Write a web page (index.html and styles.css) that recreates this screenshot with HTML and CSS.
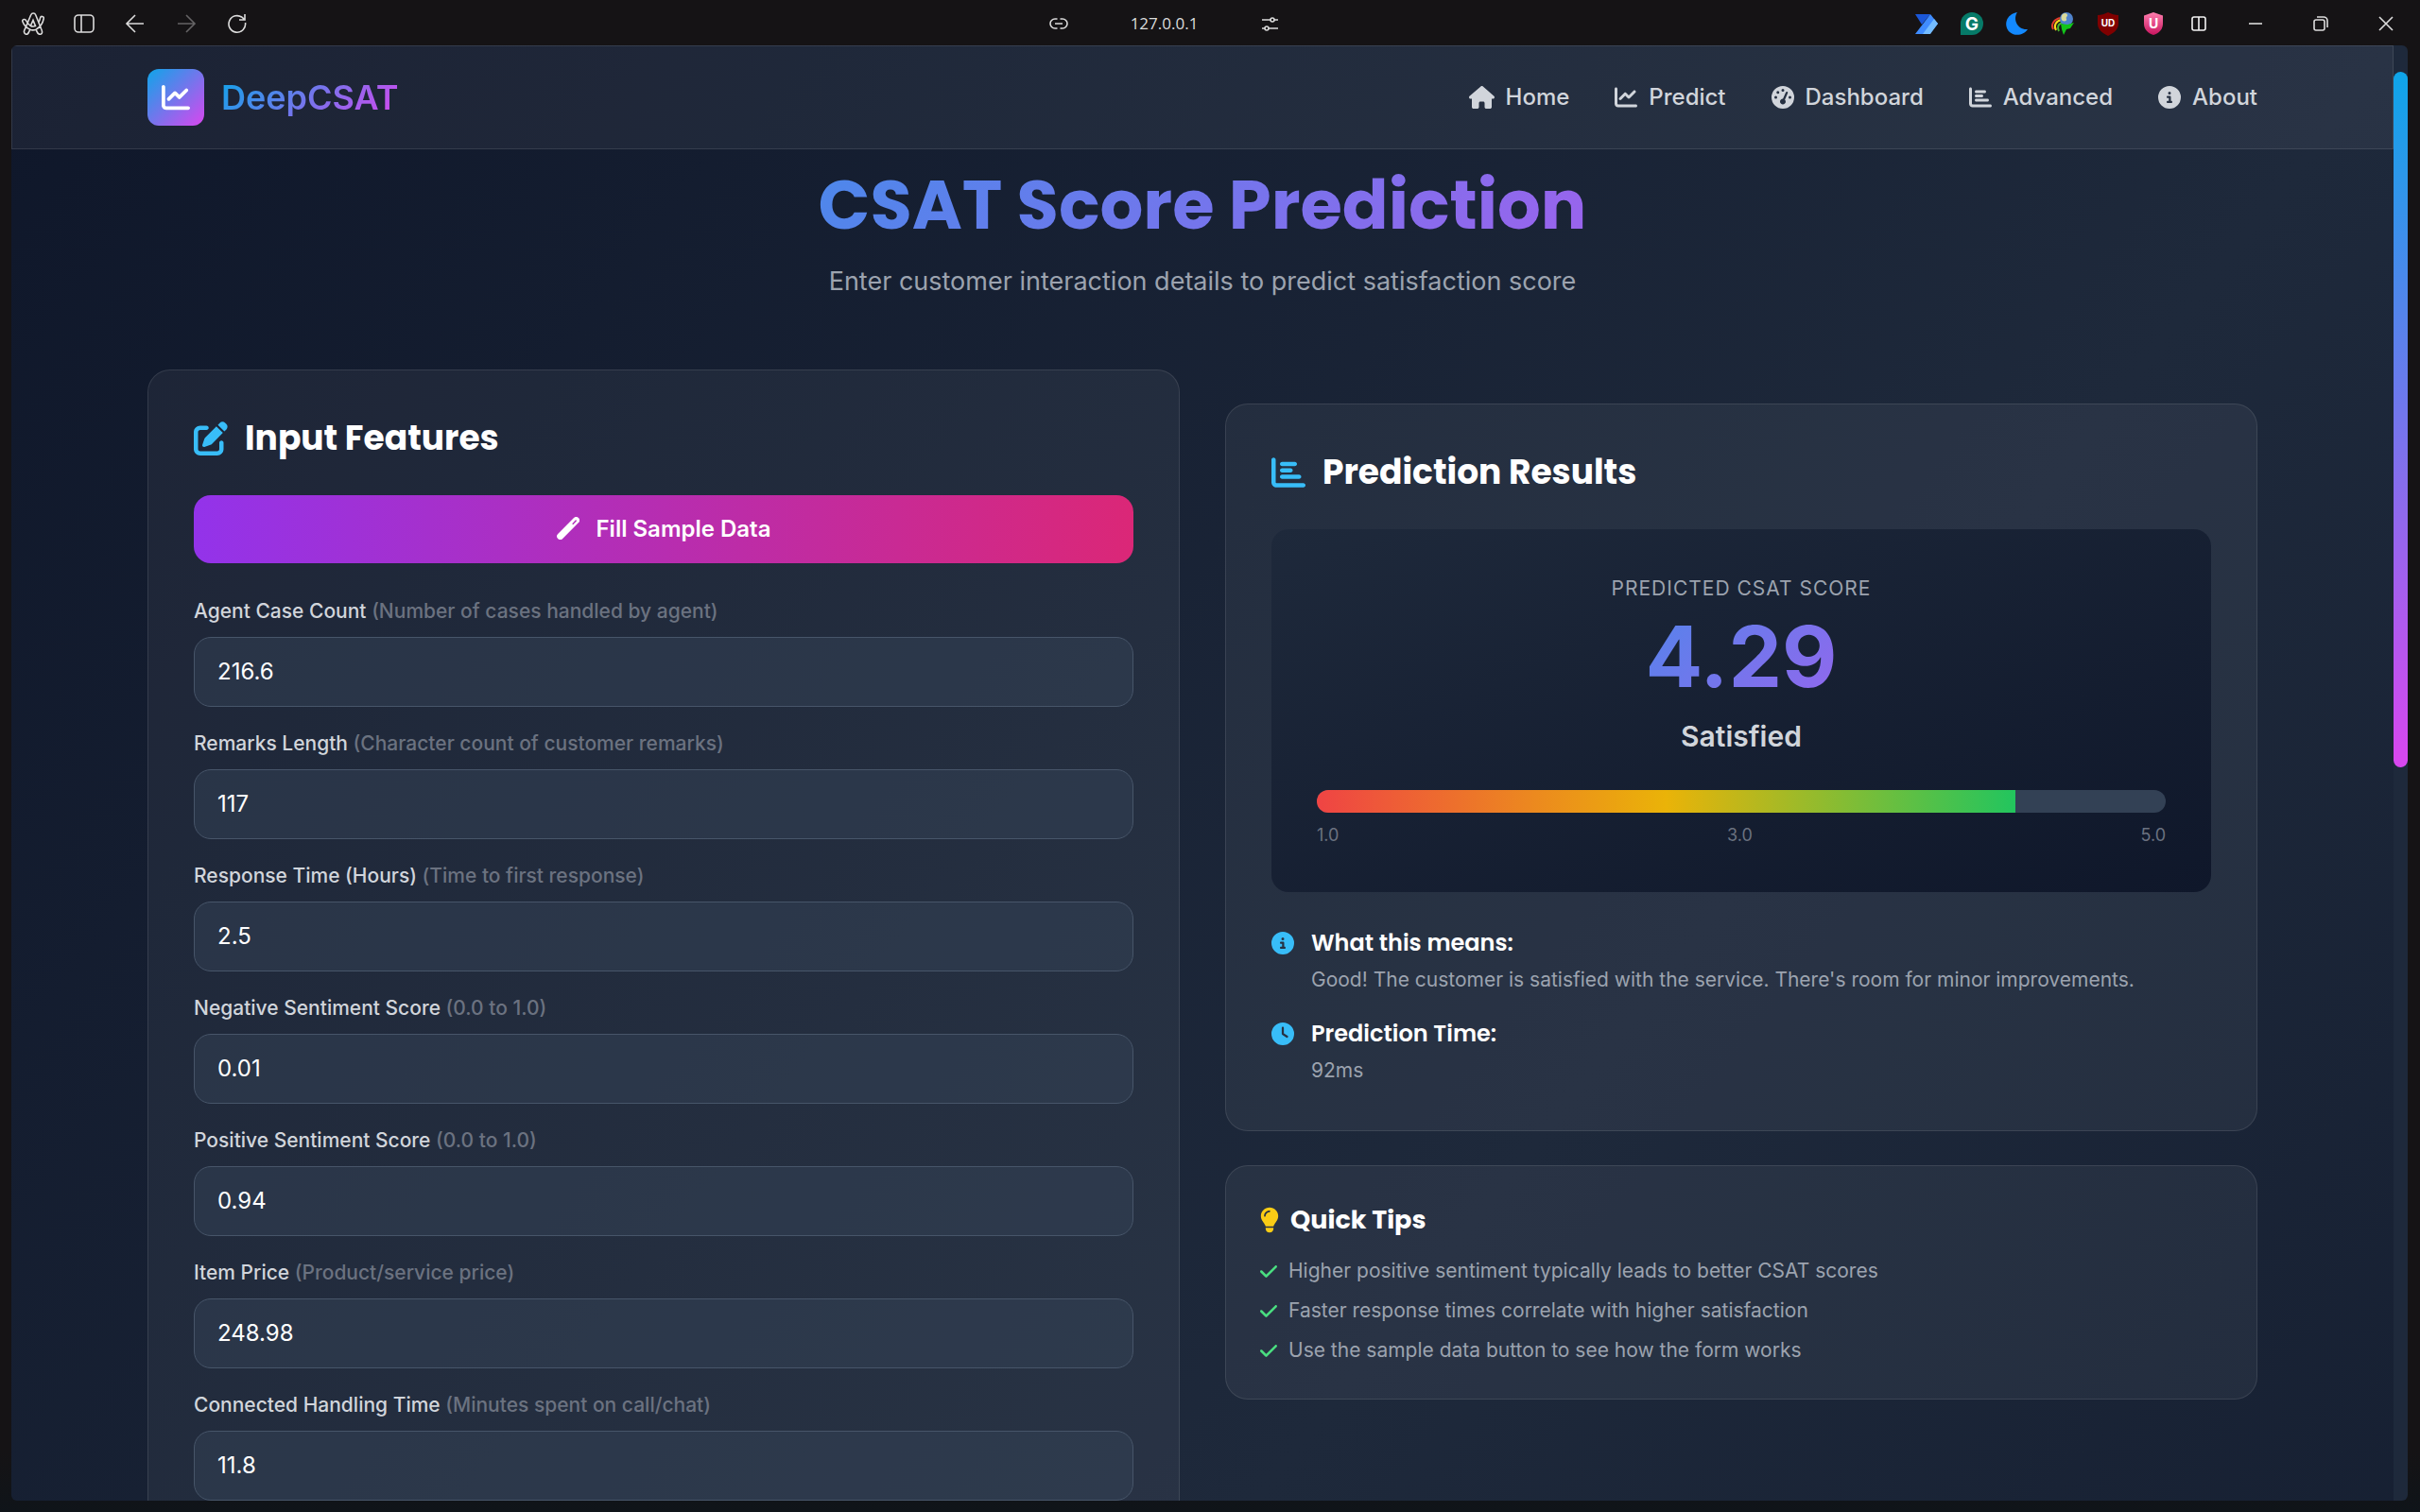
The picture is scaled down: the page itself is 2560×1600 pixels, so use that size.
FILE: index.html
```html
<!DOCTYPE html>
<html lang="en">
<head>
<meta charset="utf-8">
<meta name="viewport" content="width=device-width, initial-scale=1">
<title>DeepCSAT - CSAT Score Prediction</title>
<link rel="stylesheet" href="styles.css">
</head>
<body>
<svg class="sprite" aria-hidden="true">
  <symbol id="i-home" viewBox="0 0 576 512"><path d="M575.8 255.5c0 18-15 32.1-32 32.1h-32l.7 160.2c0 2.7-.2 5.4-.5 8.1V472c0 22.1-17.9 40-40 40H456c-1.1 0-2.2 0-3.3-.1c-1.4 .1-2.8 .1-4.2 .1H416 392c-22.1 0-40-17.9-40-40V448 384c0-17.7-14.3-32-32-32H256c-17.7 0-32 14.3-32 32v64 24c0 22.1-17.9 40-40 40H160 128.1c-1.5 0-3-.1-4.5-.2c-1.2 .1-2.4 .2-3.6 .2H104c-22.1 0-40-17.9-40-40V360c0-.9 0-1.9 .1-2.8V287.6H32c-18 0-32-14-32-32.1c0-9 3-17 10-24L266.4 8c7-7 15-8 22-8s15 2 21 7L564.8 231.5c8 7 12 15 11 24z"/></symbol>
  <symbol id="i-line" viewBox="0 0 512 512"><path d="M64 64c0-17.7-14.3-32-32-32S0 46.3 0 64V400c0 44.2 35.8 80 80 80H480c17.7 0 32-14.3 32-32s-14.3-32-32-32H80c-8.8 0-16-7.2-16-16V64zm406.6 86.6c12.5-12.5 12.5-32.8 0-45.3s-32.8-12.5-45.3 0L320 210.7l-57.4-57.4c-12.5-12.5-32.8-12.5-45.3 0l-112 112c-12.5 12.5-12.5 32.8 0 45.3s32.8 12.5 45.3 0L240 221.3l57.4 57.4c12.5 12.5 32.8 12.5 45.3 0l128-128z"/></symbol>
  <symbol id="i-gauge" viewBox="0 0 512 512"><path d="M0 256a256 256 0 1 1 512 0A256 256 0 1 1 0 256zM288 96a32 32 0 1 0 -64 0 32 32 0 1 0 64 0zM256 416c35.3 0 64-28.7 64-64c0-17.4-6.9-33.1-18.1-44.6L366 161.7c5.3-12.1-.2-26.3-12.3-31.6s-26.3 .2-31.6 12.3L257.9 288c-.6 0-1.3 0-1.9 0c-35.3 0-64 28.7-64 64s28.7 64 64 64zM176 144a32 32 0 1 0 -64 0 32 32 0 1 0 64 0zM96 288a32 32 0 1 0 0-64 32 32 0 1 0 0 64zm352-32a32 32 0 1 0 -64 0 32 32 0 1 0 64 0z"/></symbol>
  <symbol id="i-bar" viewBox="0 0 512 512"><path d="M32 32c17.7 0 32 14.3 32 32V400c0 8.8 7.2 16 16 16H480c17.7 0 32 14.3 32 32s-14.3 32-32 32H80c-44.2 0-80-35.8-80-80V64C0 46.3 14.3 32 32 32zm96 96c0-17.7 14.3-32 32-32l192 0c17.7 0 32 14.3 32 32s-14.3 32-32 32H160c-17.7 0-32-14.3-32-32zm32 64H288c17.7 0 32 14.3 32 32s-14.3 32-32 32H160c-17.7 0-32-14.3-32-32s14.3-32 32-32zm0 96H416c17.7 0 32 14.3 32 32s-14.3 32-32 32H160c-17.7 0-32-14.3-32-32s14.3-32 32-32z"/></symbol>
  <symbol id="i-info" viewBox="0 0 512 512"><path d="M256 512A256 256 0 1 0 256 0a256 256 0 1 0 0 512zM216 336h24V272H216c-13.3 0-24-10.7-24-24s10.7-24 24-24h48c13.3 0 24 10.7 24 24v88h8c13.3 0 24 10.7 24 24s-10.7 24-24 24H216c-13.3 0-24-10.7-24-24s10.7-24 24-24zm40-208a32 32 0 1 1 0 64 32 32 0 1 1 0-64z"/></symbol>
  <symbol id="i-clock" viewBox="0 0 512 512"><path d="M256 0a256 256 0 1 1 0 512A256 256 0 1 1 256 0zM232 120V256c0 8 4 15.5 10.7 20l96 64c11 7.4 25.9 4.4 33.3-6.7s4.4-25.9-6.7-33.3L280 243.2V120c0-13.3-10.7-24-24-24s-24 10.7-24 24z"/></symbol>
  <symbol id="i-edit" viewBox="0 0 512 512"><path d="M471.6 21.7c-21.9-21.9-57.3-21.9-79.2 0L362.3 51.7l97.9 97.9 30.1-30.1c21.9-21.9 21.9-57.3 0-79.2L471.6 21.7zm-299.2 220c-6.1 6.1-10.8 13.6-13.5 21.9l-29.6 88.8c-2.9 8.6-.6 18.1 5.8 24.6s15.9 8.7 24.6 5.8l88.8-29.6c8.2-2.7 15.7-7.4 21.9-13.5L437.7 172.3 339.7 74.3 172.4 241.7zM96 64C43 64 0 107 0 160V416c0 53 43 96 96 96H352c53 0 96-43 96-96V320c0-17.7-14.3-32-32-32s-32 14.3-32 32v96c0 17.7-14.3 32-32 32H96c-17.7 0-32-14.3-32-32V160c0-17.7 14.3-32 32-32h96c17.7 0 32-14.3 32-32s-14.3-32-32-32H96z"/></symbol>
  <symbol id="i-check" viewBox="0 0 448 512"><path d="M438.6 105.4c12.5 12.5 12.5 32.8 0 45.3l-256 256c-12.5 12.5-32.8 12.5-45.3 0l-128-128c-12.5-12.5-12.5-32.8 0-45.3s32.8-12.5 45.3 0L160 338.7 393.4 105.4c12.5-12.5 32.8-12.5 45.3 0z"/></symbol>
  <symbol id="i-bulb" viewBox="0 0 384 512"><path d="M272 384c9.6-31.9 29.5-59.1 49.2-86.2c5.2-7.1 10.4-14.2 15.4-21.4c19.8-28.5 31.4-63 31.4-100.3C368 78.8 289.2 0 192 0S16 78.8 16 176c0 37.3 11.6 71.9 31.4 100.3c5 7.2 10.2 14.3 15.4 21.4c19.8 27.1 39.7 54.4 49.2 86.2H272zM192 512c44.2 0 80-35.8 80-80V416H112v16c0 44.2 35.8 80 80 80zM112 176c0 8.8-7.2 16-16 16s-16-7.2-16-16c0-61.9 50.1-112 112-112c8.8 0 16 7.2 16 16s-7.2 16-16 16c-44.2 0-80 35.8-80 80z"/></symbol>
  <symbol id="i-wand" viewBox="0 0 24 24"><path fill-rule="evenodd" d="M18 1.100a3.500 3.500 0 0 1 5 5L6.200 22.900a3.500 3.500 0 0 1-5-5zM16.200 7.300l1 1 3.600-3.700a.8.8 0 0 0-1.100-1.100z"/></symbol>
</svg>

<div class="window">
  <header class="toolbar">
    <div class="tools">
      <button class="tool" aria-label="Menu"><svg viewBox="0 0 24 24"><path d="M4.500 23.200c-2.200-.8-2.600-3.200-1.200-5.200L9.600 3c1.100-2.600 4.200-2.600 5.200 0l5.800 14.500c1.400 3 1.400 5-.6 5.700-2 .5-3.200-.7-4-2.800l-.9-2.200c-2.300.9-4.500.9-6.400 0-1.300 3.600-2 5.600-4.200 5zM8.700 18.200C5 16.500 2 13 .8 9.600.4 7.500 3.700 6.500 4.600 8.800c1 2.600 2.700 4.400 4.800 5.600M15.100 18.200c4.200-2.300 7.200-6.300 8.200-11.700.2-2.400-3.200-3-3.800-.4-.3 1.900-1 3.800-2 5.300M9.400 14.400L12 8.300l2.500 6.300c-1.700.5-3.500.5-5.100-.2z"/></svg></button>
      <button class="tool" aria-label="Toggle sidebar"><svg viewBox="0 0 24 24"><rect x="2" y="3" width="20" height="18" rx="4"/><path d="M9 3v18"/></svg></button>
      <button class="tool" aria-label="Back"><svg viewBox="0 0 24 24"><path d="M21 12H3M12 3l-9 9 9 9"/></svg></button>
      <button class="tool tool-off" aria-label="Forward" disabled><svg viewBox="0 0 24 24"><path d="M3 12h18M12 3l9 9-9 9"/></svg></button>
      <button class="tool" aria-label="Reload"><svg viewBox="0 0 24 24"><path d="M20.500 11a8.800 8.800 0 1 1-3-5.300L20 8M20 2v6h-6"/></svg></button>
    </div>
    <div class="address">
      <svg class="addr-icon" viewBox="0 0 20 20"><path d="M8.500 5H6a5 5 0 0 0 0 10h2.500M11.500 5H14a5 5 0 0 1 0 10h-2.500M6 10h8"/></svg>
      <span>127.0.0.1</span>
      <svg class="addr-icon" viewBox="0 0 20 20"><path d="M2 6h9M15 6h4M2 15h3M9 15h10"/><circle cx="13" cy="6" r="2"/><circle cx="7" cy="15" r="2"/></svg>
    </div>
    <div class="right-tools">
      <div class="extensions">
        <button class="ext" aria-label="Power Automate"><svg viewBox="0 0 24 24"><path fill="#1b57d8" d="M0 2h16l-9 11z"/><path fill="#3f8cff" d="M16 2l8 10-9 11H0z"/><path fill="#74bcff" d="M20 7l4 5-8 11H8z"/></svg></button>
        <button class="ext" aria-label="Grammarly"><svg viewBox="0 0 24 24"><path fill="#067a68" d="M12 0a12 12 0 1 1 0 24H0V12A12 12 0 0 1 12 0z"/><text x="12" y="19" class="badge-g">G</text></svg></button>
        <button class="ext" aria-label="Dark mode"><svg viewBox="0 0 24 24"><path fill="#1389ff" d="M12 0C7 7 12 19 23 18c-4 6-13 8-19 3C-3 14 0 2 12 0z"/></svg></button>
        <button class="ext" aria-label="Download manager"><svg viewBox="0 0 24 24"><g fill="none" stroke-width="2"><path stroke="#e23b2c" d="M10 6C3 7-1 13 2 18"/><path stroke="#ffd91c" d="M11 8C5 9 2 14 5 19"/><path stroke="#49b82c" d="M12 11c-5 1-6 5-4 9"/></g><circle cx="16" cy="7" r="7" fill="#4f83cc"/><path fill="#d9d99a" d="M12 2c2-2 5-1 5 1s-2 2-1 4-2 3-4 2-2-5 0-7z"/><path fill="#12c41a" d="M10 12l7 1 7-2-4 6-4 1-3 6-2-6z"/></svg></button>
        <button class="ext" aria-label="uBlock Origin"><svg viewBox="0 0 24 24"><path fill="#800000" d="M12 0c4 2 7 3 11 3v9c0 6-5 10-11 13C6 22 1 18 1 12V3c4 0 7-1 11-3z"/><text x="12" y="15" class="badge-ud">UD</text></svg></button>
        <button class="ext" aria-label="Shield"><svg viewBox="0 0 24 24"><defs><linearGradient id="pink" x2="0" y2="1"><stop stop-color="#ff7fae"/><stop offset="1" stop-color="#c9145f"/></linearGradient></defs><path fill="url(#pink)" d="M12 0l10 3.500V12c0 6-4 10-10 12C6 22 2 18 2 12V3.500z"/><text x="12" y="17" class="badge-u">U</text></svg></button>
        <button class="ext" aria-label="Split view"><svg viewBox="0 0 24 24"><path class="outline" d="M7 5h10a2 2 0 0 1 2 2v10a2 2 0 0 1-2 2H7a2 2 0 0 1-2-2V7a2 2 0 0 1 2-2zM12 5v14"/></svg></button>
      </div>
      <div class="window-buttons">
        <button class="win" aria-label="Minimize"><svg viewBox="0 0 16 16"><path d="M1 8h14"/></svg></button>
        <button class="win" aria-label="Restore"><svg viewBox="0 0 16 16"><rect x="1" y="4" width="11" height="11" rx="2"/><path d="M4 1h7a4 4 0 0 1 4 4v7"/></svg></button>
        <button class="win" aria-label="Close"><svg viewBox="0 0 16 16"><path d="M1 1l14 14M15 1L1 15"/></svg></button>
      </div>
    </div>
  </header>

  <div class="viewport">
    <div class="page">
      <nav class="nav glass">
        <div class="container nav-row">
          <a class="brand" href="#">
            <span class="brand-mark"><svg><use href="#i-line"/></svg></span>
            <span class="brand-name gradient-text">DeepCSAT</span>
          </a>
          <div class="links">
            <a href="#"><svg class="wide"><use href="#i-home"/></svg>Home</a>
            <a href="#"><svg><use href="#i-line"/></svg>Predict</a>
            <a href="#"><svg><use href="#i-gauge"/></svg>Dashboard</a>
            <a href="#"><svg><use href="#i-bar"/></svg>Advanced</a>
            <a href="#"><svg><use href="#i-info"/></svg>About</a>
          </div>
        </div>
      </nav>

      <main class="container main">
        <div class="intro">
          <h1 class="gradient-text">CSAT Score Prediction</h1>
          <p>Enter customer interaction details to predict satisfaction score</p>
        </div>

        <div class="columns">
          <section class="card glass">
            <h2><svg><use href="#i-edit"/></svg>Input Features</h2>
            <button class="sample" type="button"><svg><use href="#i-wand"/></svg>Fill Sample Data</button>
            <form class="form">
              <div class="field"><label for="f1">Agent Case Count <span>(Number of cases handled by agent)</span></label><input id="f1" type="text" inputmode="decimal" value="216.6"></div>
              <div class="field"><label for="f2">Remarks Length <span>(Character count of customer remarks)</span></label><input id="f2" type="text" inputmode="decimal" value="117"></div>
              <div class="field"><label for="f3">Response Time (Hours) <span>(Time to first response)</span></label><input id="f3" type="text" inputmode="decimal" value="2.5"></div>
              <div class="field"><label for="f4">Negative Sentiment Score <span>(0.0 to 1.0)</span></label><input id="f4" type="text" inputmode="decimal" value="0.01"></div>
              <div class="field"><label for="f5">Positive Sentiment Score <span>(0.0 to 1.0)</span></label><input id="f5" type="text" inputmode="decimal" value="0.94"></div>
              <div class="field"><label for="f6">Item Price <span>(Product/service price)</span></label><input id="f6" type="text" inputmode="decimal" value="248.98"></div>
              <div class="field"><label for="f7">Connected Handling Time <span>(Minutes spent on call/chat)</span></label><input id="f7" type="text" inputmode="decimal" value="11.8"></div>
            </form>
          </section>

          <div class="side">
            <section class="card glass">
              <h2><svg><use href="#i-bar"/></svg>Prediction Results</h2>
              <div class="result">
                <div class="result-label">PREDICTED CSAT SCORE</div>
                <div class="score gradient-text">4.29</div>
                <div class="verdict">Satisfied</div>
                <div class="track"><div class="fill" style="width: 82.25%"></div></div>
                <div class="scale"><span>1.0</span><span>3.0</span><span>5.0</span></div>
              </div>
              <div class="notes">
                <div class="note"><svg><use href="#i-info"/></svg><div><h4>What this means:</h4><p>Good! The customer is satisfied with the service. There's room for minor improvements.</p></div></div>
                <div class="note"><svg><use href="#i-clock"/></svg><div><h4>Prediction Time:</h4><p>92ms</p></div></div>
              </div>
            </section>

            <section class="card tips glass">
              <h3><svg><use href="#i-bulb"/></svg>Quick Tips</h3>
              <ul>
                <li><svg><use href="#i-check"/></svg>Higher positive sentiment typically leads to better CSAT scores</li>
                <li><svg><use href="#i-check"/></svg>Faster response times correlate with higher satisfaction</li>
                <li><svg><use href="#i-check"/></svg>Use the sample data button to see how the form works</li>
              </ul>
            </section>
          </div>
        </div>
      </main>
    </div>
    <div class="scrollbar"><div class="thumb"></div></div>
  </div>
</div>
</body>
</html>
```

FILE: styles.css
```css
* { box-sizing: border-box; margin: 0; padding: 0; }

:root {
  --sky: #0ea5e9;
  --fuchsia: #d946ef;
  --body-font: Inter, "Liberation Sans", sans-serif;
  --title-font: Poppins, Inter, "Liberation Sans", sans-serif;
}

body { font-family: var(--body-font); color: #fff; background: #151315; }
button { border: 0; background: none; font: inherit; color: inherit; cursor: pointer; }
a { color: inherit; text-decoration: none; }
svg { fill: currentColor; flex: none; }
.sprite { display: none; }

.window {
  display: flex;
  flex-direction: column;
  height: 100vh;
  overflow: hidden;
  background: linear-gradient(#151315 96%, #0f1419);
}

/* Browser toolbar */
.toolbar {
  display: grid;
  grid-template-columns: 1fr auto 1fr;
  align-items: center;
  height: 48px;
  padding: 2px 28px 0 23px;
  flex: none;
  color: #dcdcdc;
}
.tools { display: flex; gap: 30px; }
.tool { display: flex; }
.tool svg { width: 24px; height: 24px; fill: none; stroke: currentColor; stroke-width: 1.6; }
.tool-off { opacity: 0.4; }
.address {
  display: flex;
  align-items: center;
  gap: 66px;
  margin-right: 92px;
  font: 17px/24px "Open Sans", "Noto Sans", sans-serif;
}
.addr-icon { width: 20px; height: 20px; fill: none; stroke: currentColor; stroke-width: 1.6; }
.right-tools { display: flex; justify-content: flex-end; gap: 40px; }
.extensions { display: flex; gap: 24px; }
.ext { display: flex; }
.ext svg { width: 24px; height: 24px; overflow: visible; }
.outline { fill: none; stroke: #f4f4f4; stroke-width: 1.6; }
.badge-g, .badge-ud, .badge-u { fill: #fff; font-weight: 700; text-anchor: middle; font-family: var(--body-font); }
.badge-g { font-size: 19px; }
.badge-ud { font-size: 10px; }
.badge-u { font-size: 14px; }
.window-buttons { display: flex; align-items: center; gap: 53px; }
.win { display: flex; }
.win svg { width: 16px; height: 16px; fill: none; stroke: currentColor; stroke-width: 1.6; }

/* Web page area */
.viewport {
  display: flex;
  flex: 1;
  min-height: 0;
  margin: 0 13px 12px 12px;
  border-radius: 6px;
  overflow: hidden;
}
.page {
  flex: 1;
  overflow: hidden;
  background: linear-gradient(to bottom right, #0f172a, #1e293b, #0f172a) 0 0 / 100% 3222px;
}
.scrollbar { width: 15px; padding-top: 28px; background: #1e293b; }
.thumb { height: 48.7%; border-radius: 8px; background: linear-gradient(var(--sky), var(--fuchsia)); }

.glass { background: rgba(255, 255, 255, 0.05); border: 1px solid rgba(255, 255, 255, 0.1); }
.container { width: 100%; max-width: 2304px; margin: 0 auto; padding: 0 36px; }
.gradient-text {
  background: linear-gradient(135deg, var(--sky), var(--fuchsia));
  -webkit-background-clip: text;
  background-clip: text;
  color: transparent;
}

.nav-row { display: flex; justify-content: space-between; align-items: center; height: 108px; }
.brand { display: flex; align-items: center; gap: 18px; }
.brand-mark {
  display: grid;
  place-items: center;
  width: 60px;
  height: 60px;
  border-radius: 12px;
  background: linear-gradient(135deg, var(--sky), var(--fuchsia));
}
.brand-mark svg { width: 30px; height: 30px; }
.brand-name { font-size: 36px; line-height: 48px; font-weight: 600; }
.links { display: flex; gap: 48px; color: #d1d5db; font-size: 24px; line-height: 36px; font-weight: 500; }
.links a { display: flex; align-items: center; gap: 12px; }
.links svg { width: 24px; height: 24px; }
.links .wide { width: 27px; }

.main { padding-top: 23px; padding-bottom: 72px; }
.intro { margin-bottom: 72px; text-align: center; }
h1 { margin-bottom: 24px; font: 700 72px/72px var(--title-font); }
.intro p { color: #9ca3af; font-size: 27px; line-height: 42px; }

.columns { display: grid; grid-template-columns: 1fr 1fr; gap: 48px; align-items: start; }
.side { display: grid; gap: 36px; padding-top: 36px; }
.card { padding: 48px; border-radius: 24px; }
h2 { display: flex; align-items: center; gap: 18px; margin-bottom: 36px; font: 700 36px/48px var(--title-font); }
h2 svg { width: 36px; height: 36px; color: #38bdf8; }

.sample {
  display: flex;
  align-items: center;
  justify-content: center;
  gap: 18px;
  width: 100%;
  height: 72px;
  margin-bottom: 36px;
  padding-bottom: 2px;
  border-radius: 18px;
  background: linear-gradient(90deg, #9333ea, #db2777);
  font-size: 24px;
  font-weight: 600;
}
.sample svg { width: 24px; height: 24px; }

.form { display: grid; gap: 24px; }
.field { display: grid; gap: 12px; }
.field label { color: #d1d5db; font-size: 21px; line-height: 30px; font-weight: 500; }
.field label span { color: #6b7280; }
.field input {
  width: 100%;
  height: 74px;
  padding: 0 24px 2px;
  border: 1px solid #475569;
  border-radius: 18px;
  background: rgba(51, 65, 85, 0.5);
  color: #fff;
  font: 24px/36px var(--body-font);
}

.result {
  padding: 48px;
  border-radius: 18px;
  background: linear-gradient(to bottom right, #1e293b, #0f172a);
  text-align: center;
}
.result-label { margin-bottom: 12px; color: #9ca3af; font-size: 21px; line-height: 30px; letter-spacing: 1px; }
.score { margin-bottom: 18px; font-size: 90px; line-height: 90px; font-weight: 700; }
.verdict { margin-bottom: 36px; color: #d1d5db; font-size: 30px; line-height: 42px; font-weight: 600; }
.track { height: 24px; border-radius: 12px; background: #334155; overflow: hidden; }
.fill { height: 100%; background: linear-gradient(90deg, #ef4444, #eab308, #22c55e); }
.scale { display: flex; justify-content: space-between; margin-top: 12px; color: #6b7280; font-size: 18px; line-height: 24px; }

.notes { display: grid; gap: 24px; margin-top: 36px; }
.note { display: flex; gap: 18px; }
.note svg { width: 24px; height: 24px; margin-top: 6px; color: #38bdf8; }
h4 { margin-bottom: 6px; font: 600 24px/36px var(--title-font); }
.note p { color: #9ca3af; font-size: 21px; line-height: 30px; }

.tips { padding: 36px; }
h3 { display: flex; align-items: center; gap: 12px; margin-bottom: 18px; font: 700 27px/42px var(--title-font); }
h3 svg { width: 20px; height: 28px; color: #facc15; }
.tips ul { display: grid; gap: 12px; list-style: none; }
.tips li { display: flex; align-items: center; gap: 12px; color: #9ca3af; font-size: 21px; line-height: 30px; }
.tips li svg { width: 18px; height: 21px; color: #4ade80; }
```
